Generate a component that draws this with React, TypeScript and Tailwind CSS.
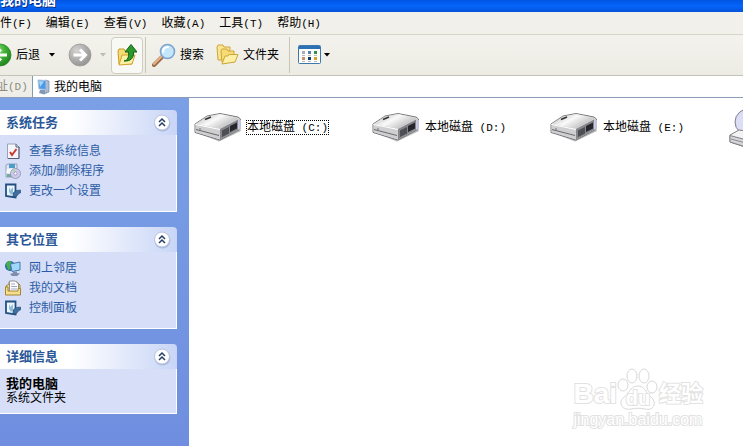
import type { ReactNode } from "react";
import clsx from "clsx";

const menus = ["文件(F)", "编辑(E)", "查看(V)", "收藏(A)", "工具(T)", "帮助(H)"];
const drives = ["本地磁盘 (C:)", "本地磁盘 (D:)", "本地磁盘 (E:)"];

// Latin runs are set in a half-width mono face next to the full-width characters
function Mixed({ text }: { text: string }) {
  const at = text.search(/[ (]/);
  if (at < 0) return <>{text}</>;
  return (
    <>
      {text.slice(0, at)}
      <span className="whitespace-pre font-['Liberation_Mono',monospace] text-[11px]">
        {text.slice(at)}
      </span>
    </>
  );
}

function Caret({ muted }: { muted?: boolean }) {
  return (
    <svg width="6" height="4" viewBox="0 0 6 4" className="shrink-0">
      <path d="M0 0h6L3 3.5z" fill={muted ? "#bdbbb0" : "#000"} />
    </svg>
  );
}

function ArrowCircle({ back }: { back?: boolean }) {
  const id = back ? "back" : "forward";
  return (
    <svg width="24" height="24" viewBox="0 0 24 24" className="shrink-0">
      <defs>
        <radialGradient id={id} cx="0.35" cy="0.3" r="0.8">
          <stop offset="0" stopColor={back ? "#8fe07c" : "#d4d4d2"} />
          <stop offset="0.5" stopColor={back ? "#3fae35" : "#b0b0ae"} />
          <stop offset="1" stopColor={back ? "#1c7a1a" : "#8e8e8c"} />
        </radialGradient>
      </defs>
      <circle cx="12" cy="12" r="11" fill={`url(#${id})`} stroke={back ? "#2d8a28" : "#9b9b99"} strokeWidth="0.8" />
      <path
        d={back ? "M19 12H8M13 6.5 7.5 12l5.500 5.500" : "M5.500 12h11M12 6.500l5.500 5.500-5.500 5.500"}
        fill="none"
        stroke="#fff"
        strokeWidth="3"
      />
    </svg>
  );
}

function UpFolder() {
  return (
    <svg width="20" height="24" viewBox="0 0 20 24">
      <path d="M1 8l1-2h5l1 2h7v13H2z" fill="#f6dc74" stroke="#c79a28" />
      <path d="M2 22l3-10h13l-3 9z" fill="#fdf0a0" stroke="#d0a42e" />
      <path d="M7 18c4-1 5-4 4.500-9H8l6-7.500L20 9h-3.500c.6 6-3 9.500-9.500 9z" fill="#2c992c" stroke="#12601a" />
    </svg>
  );
}

function SearchIcon() {
  return (
    <svg width="24" height="24" viewBox="0 0 24 24">
      <path d="M10 14l-8 8" stroke="#9d6a45" strokeWidth="4" strokeLinecap="round" />
      <path d="M9.500 13.500l-7.500 7.500" stroke="#e8b48a" strokeWidth="2" strokeLinecap="round" />
      <circle cx="15.500" cy="8.500" r="7" fill="#c3e6fa" stroke="#7da4cf" strokeWidth="1.600" />
      <path d="M11 9c0-3 2-5 5-5" fill="none" stroke="#fff" strokeWidth="2.200" strokeLinecap="round" />
    </svg>
  );
}

function FoldersIcon() {
  return (
    <svg width="23" height="22" viewBox="0 0 23 22">
      <path d="M1 3l1-2h5l1 2h6v3l-9 10H2z" fill="#f9e491" stroke="#cda53c" />
      <path d="M5 7l1-2h5l1 2h6v11H6z" fill="#f7dc76" stroke="#cda53c" />
      <path d="M6 20l3-8h3l1-1.500h9L19 18z" fill="#fdf0a5" stroke="#cda53c" strokeLinejoin="round" />
    </svg>
  );
}

function ViewsIcon() {
  const tones = ["#a7aac8", "#5f7fb4", "#2f9248", "#c99169", "#16396c", "#d4a135"];
  return (
    <svg width="24" height="20" viewBox="0 0 24 20">
      <rect x="0.500" y="0.500" width="22" height="18" rx="1" fill="#fdfdfa" stroke="#3c77ad" />
      <path d="M1 1h21v3H1z" fill="#2d70b3" />
      {tones.map((tone, i) => (
        <g key={tone}>
          <rect x={4 + (i % 3) * 6} y={6 + Math.floor(i / 3) * 6} width="3" height="3" fill={tone} />
          <path d={`M${4 + (i % 3) * 6} ${10.5 + Math.floor(i / 3) * 6}h3`} stroke="#bbb" />
        </g>
      ))}
    </svg>
  );
}

function ComputerIcon() {
  return (
    <svg width="13" height="16" viewBox="0 0 13 16">
      <path d="M8 1l4 1v11l-3 1z" fill="#aebbd0" stroke="#7788a5" strokeWidth="0.700" />
      <path d="M1 1l8 .5v9L2 10z" fill="#4a9be8" stroke="#a9bfd9" />
      <path d="M2 2l5 .5L3 8z" fill="#a4d5fa" />
      <path d="M3 11h5v2l2 1-3 1.500L2 14z" fill="#8496b5" />
    </svg>
  );
}

function CheckedPage() {
  return (
    <svg width="16" height="16" viewBox="0 0 16 16">
      <path d="M2.500 1h8.500l3 3v11.500H2.500z" fill="#f4f6fc" stroke="#9aa3b8" />
      <path d="M11 1v3h3v11.500H3" fill="none" stroke="#4f5b78" />
      <path d="M5 9l2 3 4.500-6" fill="none" stroke="#cc3a30" strokeWidth="2" />
    </svg>
  );
}

function ProgramsIcon() {
  return (
    <svg width="16" height="16" viewBox="0 0 16 16">
      <path d="M1 2l2-1h9v4l-4 9H1z" fill="#dfe7f1" stroke="#8ea2bd" />
      <path d="M4 1h6v4H4z" fill="#4f9bc9" />
      <path d="M2 6h6v4H1z" fill="#f5f7fa" />
      <path d="M2 11h5v3H2z" fill="#74aa97" />
      <circle cx="10.500" cy="10.500" r="5" fill="#cfcaea" stroke="#8a8eb4" strokeWidth="0.800" />
      <path d="M10.500 10.500L7 7.500l3-1.500z" fill="#a8dfa8" />
      <circle cx="10.500" cy="10.500" r="1.600" fill="#fff" stroke="#8a8eb4" strokeWidth="0.800" />
    </svg>
  );
}

function SettingsIcon() {
  return (
    <svg width="16" height="16" viewBox="0 0 16 16">
      <path d="M1 1.500h9.500v13L1 13z" fill="#eef5fb" stroke="#235080" strokeWidth="1.800" />
      <path d="M4 4l1.500 3L8 4v6l-2 2-2-3z" fill="#8fbcdc" />
      <path d="M15.500 7l-4 .5L8 10v3l3 1 3-3.500 2-1z" fill="#3f6f9e" stroke="#234b73" strokeWidth="0.600" />
    </svg>
  );
}

function NetworkIcon() {
  return (
    <svg width="16" height="16" viewBox="0 0 16 16">
      <circle cx="5" cy="6" r="5" fill="#2468a8" />
      <path d="M1 4c2-4 5-3 6-2L5 6l1 3-3 1z" fill="#48ad50" />
      <path d="M5.500 4l9.500-2v8l-8 1.500z" fill="#9fd8f8" stroke="#4a7bb2" />
      <path d="M8 11.500h4v1.500l3 .5-3 2.500H7l-2-2 3-1z" fill="#7f8cae" />
    </svg>
  );
}

function DocumentsIcon() {
  return (
    <svg width="16" height="16" viewBox="0 0 16 16">
      <path d="M1 6l3-2V2h8l3 3v9H1z" fill="#f2d675" stroke="#a78435" />
      <path d="M4.500 1h6l3 3v8h-9z" fill="#fff" stroke="#909098" />
      <path d="M6 4h4M6 6.500h6M6 9h6" stroke="#9aa9ca" />
      <path d="M.5 7H3v4h10V8.500h2.500v6.500H.5z" fill="#f5df8c" stroke="#a78435" />
    </svg>
  );
}

function DriveIcon() {
  return (
    <svg width="48" height="30" viewBox="0 0 48 30" className="shrink-0">
      <defs>
        <linearGradient id="driveTop" x1="0" y1="0" x2="1" y2="0.600">
          <stop offset="0" stopColor="#a9a9ab" />
          <stop offset="0.500" stopColor="#fafafa" />
          <stop offset="1" stopColor="#b4b4b6" />
        </linearGradient>
      </defs>
      <path d="M1 20l24 9.500L47 19l-2-3z" fill="#b9b9bb" />
      <path d="M1 12L13 4l13-2.500L44 5l2.500 2v10L26 28 1 20.500z" fill="#d6d6d8" stroke="#6d6d71" strokeWidth="0.900" strokeLinejoin="round" />
      <path d="M1.500 12L13 4.500 26 2l18.500 4L26 16.500z" fill="url(#driveTop)" />
      <path d="M1.500 12L26 17v10.500L1.500 20z" fill="#cfcfd2" />
      <path d="M1.500 12.500L26 17.500" stroke="#fff" />
      <path d="M2 17.500l23 6" stroke="#6a6a6e" />
      <path d="M26 17l18-9.500v10L26 27.500z" fill="#85858a" />
      <path d="M28 18.500l7-3.500v6.500l-7 3.500z" fill="#4e4e55" />
      <path d="M36 14l7-3.500v6L36 20z" fill="#25252d" />
      <path d="M44.500 7L47 8v9l-2.500 1z" fill="#c4c2dc" />
      <path d="M11 7.500l6-2.500" stroke="#333" strokeWidth="1.600" />
      <circle cx="6" cy="17" r="0.800" fill="#666" />
    </svg>
  );
}

function DiscDriveIcon() {
  return (
    <svg width="48" height="42" viewBox="0 0 48 42" className="shrink-0">
      <ellipse cx="23" cy="15" rx="16" ry="14" fill="#dcdef6" stroke="#7b7c95" />
      <ellipse cx="23" cy="15" rx="5" ry="4" fill="#fff" stroke="#9999ae" />
      <path d="M2 28l9-5 35 5v7l-20 8L2 35z" fill="#f3f3f5" stroke="#808085" />
      <path d="M2 28.500l24 6.500v7.500L2 35z" fill="#d5d6d9" stroke="#808085" />
      <path d="M3 32l22 6" stroke="#8c8c90" />
    </svg>
  );
}

const panels = [
  {
    title: "系统任务",
    links: [
      { text: "查看系统信息", icon: <CheckedPage /> },
      { text: "添加/删除程序", icon: <ProgramsIcon /> },
      { text: "更改一个设置", icon: <SettingsIcon /> },
    ],
  },
  {
    title: "其它位置",
    links: [
      { text: "网上邻居", icon: <NetworkIcon /> },
      { text: "我的文档", icon: <DocumentsIcon /> },
      { text: "控制面板", icon: <SettingsIcon /> },
    ],
  },
];

function Panel({ title, children }: { title: string; children: ReactNode }) {
  return (
    <section>
      <header className="flex h-[25px] items-center justify-between rounded-tr bg-linear-to-r from-white from-40% to-[#c8d5f6] pr-1.5 pl-1.5">
        <h2 className="text-[13px] font-bold text-[#2a5797]">{title}</h2>
        <button type="button" aria-label={title} className="rounded-full">
          <svg width="18" height="18" viewBox="0 0 18 18">
            <circle cx="9.500" cy="9.500" r="8" fill="#8b9ac4" opacity="0.500" />
            <circle cx="9" cy="8.500" r="7.500" fill="#fff" stroke="#b9c3df" />
            <path d="M6 8l3-3 3 3M6 12l3-3 3 3" fill="none" stroke="#243c66" strokeWidth="1.500" />
          </svg>
        </button>
      </header>
      <div className="border-r border-b border-white bg-[#d6dff7]">{children}</div>
    </section>
  );
}

function Divider() {
  return <div className="h-9 w-px shrink-0 bg-[#c9c6b8]" />;
}

export default function App() {
  return (
    <div className="relative flex min-h-screen flex-col overflow-hidden bg-white font-['Liberation_Sans','Noto_Sans_CJK_SC',sans-serif] text-xs text-black">
      <div className="flex h-3 items-end overflow-hidden bg-linear-to-b from-[#0054e3] via-[#0565fb] to-[#0453d8] pb-1">
        <h1 className="text-sm leading-4 font-bold text-white [text-shadow:1px_1px_#0a2d80]">我的电脑</h1>
      </div>

      <nav className="flex h-[23px] items-center overflow-hidden border-b border-[#d8d5c7] bg-[#f1f0ea]">
        <div className="-ml-3 flex gap-3.5">
          {menus.map((menu) => (
            <button key={menu} type="button" className="shrink-0 whitespace-nowrap">
              <Mixed text={menu} />
            </button>
          ))}
        </div>
      </nav>

      <div className="flex h-[41px] items-center overflow-hidden border-b border-[#c5c3b8] bg-linear-to-b from-[#f3f2ec] to-[#ecebe4]">
        <button type="button" className="-ml-3 flex shrink-0 items-center gap-1">
          <ArrowCircle back />
          后退
        </button>
        <button type="button" aria-label="后退" className="ml-2 p-px">
          <Caret />
        </button>
        <button type="button" aria-label="前进" className="ml-3 flex shrink-0 items-center gap-2">
          <ArrowCircle />
          <Caret muted />
        </button>
        <button
          type="button"
          aria-label="向上"
          className="mr-0.5 ml-[5px] flex h-[37px] w-8 shrink-0 items-center justify-center rounded-sm border border-[#cfcdc0] bg-[#f8f8f4]"
        >
          <UpFolder />
        </button>
        <Divider />
        <button type="button" className="ml-1.5 flex shrink-0 items-center gap-1">
          <SearchIcon />
          搜索
        </button>
        <button type="button" className="mr-2.5 ml-3 flex shrink-0 items-center gap-1">
          <FoldersIcon />
          文件夹
        </button>
        <Divider />
        <button type="button" aria-label="查看" className="ml-2 flex shrink-0 items-center gap-0.5">
          <ViewsIcon />
          <Caret />
        </button>
      </div>

      <div className="flex h-[22px] overflow-hidden border-b border-[#8b9bb8] bg-[#efeee8]">
        <label htmlFor="address" className="-ml-4 w-12 shrink-0 self-center whitespace-nowrap text-[#8d8b80]">
          <Mixed text="地址(D)" />
        </label>
        <div className="flex flex-1 items-center gap-1 border-l border-[#7f9db9] bg-white pl-1">
          <ComputerIcon />
          <input id="address" defaultValue="我的电脑" className="min-w-0 flex-1 outline-none" />
        </div>
      </div>

      <div className="flex flex-1">
        <aside className="flex w-[189px] shrink-0 flex-col gap-[15px] bg-linear-to-b from-[#7ba0e6] to-[#6f8edf] pt-3 pr-3">
          {panels.map((panel) => (
            <Panel key={panel.title} title={panel.title}>
              <ul className="pt-1.5 pb-2.5 pl-[5px]">
                {panel.links.map((link) => (
                  <li key={link.text}>
                    <a href="#" className="flex h-5 items-center gap-2 text-[#2c5ca5]">
                      {link.icon}
                      {link.text}
                    </a>
                  </li>
                ))}
              </ul>
            </Panel>
          ))}
          <Panel title="详细信息">
            <div className="py-2 pl-1.5">
              <p className="text-[13px] leading-3.5 font-bold">我的电脑</p>
              <p className="leading-3.5">系统文件夹</p>
            </div>
          </Panel>
        </aside>

        <main className="flex min-w-0 flex-1 items-start overflow-hidden pt-[9px] pl-[5px]">
          {drives.map((drive, i) => (
            <button key={drive} type="button" className="flex h-10 w-[178px] shrink-0 items-center gap-1 whitespace-nowrap">
              <DriveIcon />
              <span className={clsx("border border-dotted leading-3", i === 0 ? "border-black" : "border-transparent")}>
                <Mixed text={drive} />
              </span>
            </button>
          ))}
          <DiscDriveIcon />
        </main>
      </div>

      <div className="absolute right-10 bottom-4 text-white [paint-order:stroke_fill] [-webkit-text-stroke:2px_#e2e2e2]">
        <div className="flex items-end">
          <span className="text-[28px] leading-8 font-bold">Bai</span>
          <div className="relative flex h-[42px] w-[42px] items-end justify-center">
            <svg width="42" height="42" viewBox="0 0 42 42" className="absolute inset-0 [paint-order:normal]" fill="#fff" stroke="#d8d8d8">
              <ellipse cx="6" cy="17" rx="5" ry="6" />
              <ellipse cx="15" cy="8" rx="5" ry="7" />
              <ellipse cx="27" cy="8" rx="5" ry="7" />
              <ellipse cx="35" cy="19" rx="5" ry="6" />
              <path d="M21 18c5 0 7 4 10 8 4 4 7 6 6 11-1 4-5 5-9 4-5-1-9-1-14 0-5 1-9-1-10-5-1-5 4-7 7-11s5-7 10-7z" />
            </svg>
            <span className="relative text-xl leading-6 font-bold">du</span>
          </div>
          <span className="text-[22px] leading-8 font-bold">经验</span>
        </div>
        <div className="text-base leading-5">jingyan.baidu.com</div>
      </div>
    </div>
  );
}
